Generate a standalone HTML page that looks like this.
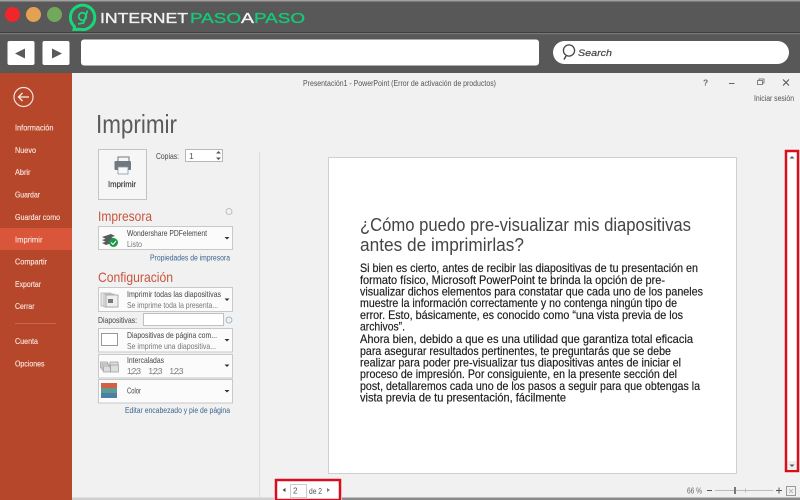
<!DOCTYPE html>
<html lang="es">
<head>
<meta charset="utf-8">
<title>Imprimir</title>
<style>
html,body{margin:0;padding:0;width:800px;height:500px;overflow:hidden;background:#f1f1f1}
svg{display:block}
text{font-family:"Liberation Sans",sans-serif}
</style>
</head>
<body>
<svg width="800" height="500" viewBox="0 0 800 500" xmlns="http://www.w3.org/2000/svg">
<defs><filter id="b" filterUnits="userSpaceOnUse" x="0" y="0" width="800" height="500"><feGaussianBlur stdDeviation="0.3"/></filter></defs>
<g filter="url(#b)">
<rect width="800" height="500" fill="#f1f1f1"/>
<!-- browser chrome -->
<rect width="800" height="73" fill="#585858"/>
<rect y="0" width="800" height="1.500" fill="#a0a0a0"/>
<rect y="32" width="800" height="1" fill="#404040"/>
<rect y="33" width="800" height="1.200" fill="#777"/>
<circle cx="12.500" cy="14.500" r="7.500" fill="#f0252a"/>
<circle cx="33.500" cy="14.500" r="7.500" fill="#e5a153"/>
<circle cx="54.500" cy="14.500" r="7.500" fill="#72a85c"/>
<g fill="none" stroke="#14d878">
<path d="M74 29.500 L74.500 26.500 A12.200 12.200 0 1 1 80 29.300 Z" stroke-width="3"/>
<circle cx="82.500" cy="16.500" r="3.800" stroke-width="1.800"/>
<path d="M87.500 10.500 L83.500 23 L78 24" stroke-width="1.800"/>
</g>
<text x="100" y="23" font-size="15" fill="#f2f2f2" stroke="#f2f2f2" stroke-width=".35" textLength="88" lengthAdjust="spacingAndGlyphs">INTERNET</text>
<text x="190" y="23" font-size="15" fill="#15c878" stroke="#15c878" stroke-width=".35" textLength="51" lengthAdjust="spacingAndGlyphs">PASO</text>
<text x="241" y="23" font-size="15" fill="#f2f2f2" stroke="#f2f2f2" stroke-width=".35" textLength="13" lengthAdjust="spacingAndGlyphs">A</text>
<text x="254" y="23" font-size="15" fill="#15c878" stroke="#15c878" stroke-width=".35" textLength="51" lengthAdjust="spacingAndGlyphs">PASO</text>
<rect x="7.500" y="41" width="27" height="24" rx="2" fill="#fff"/>
<rect x="42.500" y="41" width="27" height="24" rx="2" fill="#fff"/>
<path d="M15 53.500 L25 48.500 V58.500 Z" fill="#5a5a5a"/>
<path d="M62 53.500 L52 48.500 V58.500 Z" fill="#5a5a5a"/>
<rect x="81" y="39.500" width="458" height="26" rx="3" fill="#fff"/>
<rect x="553" y="41" width="236" height="23" rx="11.500" fill="#fff"/>
<circle cx="569" cy="50.500" r="5.600" fill="none" stroke="#444" stroke-width="1.300"/>
<path d="M566 56 L564 59.500" stroke="#444" stroke-width="1.500"/>
<text x="578" y="56" font-size="9.500" font-style="italic" fill="#444" stroke="#444" stroke-width=".2" textLength="34" lengthAdjust="spacingAndGlyphs">Search</text>
<!-- sidebar -->
<rect x="0" y="73" width="72" height="427" fill="#b7472a"/>
<rect x="0" y="228" width="72" height="22" fill="#d9573a"/>
<circle cx="23.500" cy="97" r="9.500" fill="none" stroke="#f4e3dd" stroke-width="1.200"/>
<path d="M29 97 H18.500 M22.500 93 L18.500 97 L22.500 101" fill="none" stroke="#f8eeea" stroke-width="1.300"/>
<g font-size="8.300" fill="#fbe9e3" stroke="#fbe9e3" stroke-width=".12">
<text x="15" y="130.500" textLength="38.500" lengthAdjust="spacingAndGlyphs">Información</text>
<text x="15" y="153" textLength="21" lengthAdjust="spacingAndGlyphs">Nuevo</text>
<text x="15" y="175" textLength="15.500" lengthAdjust="spacingAndGlyphs">Abrir</text>
<text x="15" y="197.500" textLength="25" lengthAdjust="spacingAndGlyphs">Guardar</text>
<text x="15" y="220" textLength="45" lengthAdjust="spacingAndGlyphs">Guardar como</text>
<text x="15" y="242.500" textLength="27.500" lengthAdjust="spacingAndGlyphs">Imprimir</text>
<text x="15" y="264.500" textLength="32" lengthAdjust="spacingAndGlyphs">Compartir</text>
<text x="15" y="287" textLength="26" lengthAdjust="spacingAndGlyphs">Exportar</text>
<text x="15" y="309" textLength="19.500" lengthAdjust="spacingAndGlyphs">Cerrar</text>
<text x="15" y="344" textLength="23" lengthAdjust="spacingAndGlyphs">Cuenta</text>
<text x="15" y="366.500" textLength="29.500" lengthAdjust="spacingAndGlyphs">Opciones</text>
</g>
<rect x="15" y="323" width="41" height="1" fill="#c7684f"/>
<!-- title bar -->
<text x="303" y="86" font-size="8" fill="#555" textLength="193" lengthAdjust="spacingAndGlyphs">Presentación1 - PowerPoint (Error de activación de productos)</text>
<text x="703" y="85.500" font-size="8.500" font-weight="bold" fill="#666">?</text>
<rect x="729" y="83" width="5.500" height="1" fill="#666"/>
<path d="M757.500 80.500 h5 v4 h-5 z M759 80.500 v-1.500 h5 v4 h-1.500" fill="none" stroke="#666" stroke-width=".8"/>
<path d="M783 79.500 L789 85.500 M789 79.500 L783 85.500" stroke="#555" stroke-width="1"/>
<text x="754" y="101" font-size="8" fill="#555" textLength="40" lengthAdjust="spacingAndGlyphs">Iniciar sesión</text>
<!-- print panel -->
<text x="96" y="133" font-size="26" fill="#5a5a5a" textLength="81" lengthAdjust="spacingAndGlyphs">Imprimir</text>
<rect x="98.500" y="149.500" width="48" height="50" fill="#f6f6f6" stroke="#c4c4c4"/>
<g>
<rect x="118" y="157" width="11" height="5" fill="#f6f6f6" stroke="#6f7880"/>
<rect x="114.500" y="161" width="16.500" height="9" rx="1" fill="#6f7880"/>
<rect x="118" y="167" width="10" height="7" fill="#f8f8f8" stroke="#8a98a8" stroke-width=".8"/>
</g>
<text x="108" y="187" font-size="8.300" fill="#333" stroke="#333" stroke-width=".15" textLength="28" lengthAdjust="spacingAndGlyphs">Imprimir</text>
<text x="156" y="159" font-size="8.300" fill="#444" textLength="23" lengthAdjust="spacingAndGlyphs">Copias:</text>
<rect x="185.500" y="149.500" width="37" height="12" fill="#fff" stroke="#b8b8b8"/>
<text x="189" y="159" font-size="8.500" fill="#555">1</text>
<path d="M216 153.500 h5 l-2.500 -2.500 z M216 157.500 h5 l-2.500 2.500 z" fill="#555"/>

<text x="98" y="221" font-size="14" fill="#c8553d" textLength="54" lengthAdjust="spacingAndGlyphs">Impresora</text>
<circle cx="229" cy="211.500" r="3" fill="none" stroke="#aab4c0" stroke-width=".8"/>
<rect x="98.500" y="226.500" width="134" height="23" fill="#fbfbfb" stroke="#c8c8c8"/>
<path d="M102 237 l9 -3 4 2 -9 3z M102 240 l9 -3 4 2 -9 3z M102 243 l9 -3 4 2 -9 3z" fill="#5a5a5a"/>
<circle cx="113.500" cy="242.500" r="4.500" fill="#1a9a4a"/>
<path d="M111 242.500 l2 2 3 -3.500" fill="none" stroke="#fff" stroke-width="1"/>
<text x="127" y="236" font-size="8.200" fill="#444" textLength="80" lengthAdjust="spacingAndGlyphs">Wondershare PDFelement</text>
<text x="127" y="247" font-size="8.200" fill="#777" textLength="15" lengthAdjust="spacingAndGlyphs">Listo</text>
<path d="M224.500 237 h5 l-2.500 2.500 z" fill="#333"/>
<text x="150" y="260.500" font-size="8" fill="#3d6490" textLength="80" lengthAdjust="spacingAndGlyphs">Propiedades de impresora</text>

<text x="98" y="282" font-size="14" fill="#c8553d" textLength="75" lengthAdjust="spacingAndGlyphs">Configuración</text>
<g fill="#fbfbfb" stroke="#c8c8c8">
<rect x="98.500" y="287.500" width="134" height="24"/>
<rect x="98.500" y="328.500" width="134" height="23.500"/>
<rect x="98.500" y="354.500" width="134" height="23.500"/>
<rect x="98.500" y="379.500" width="134" height="23.500"/>
</g>
<rect x="101" y="293" width="10" height="13" fill="#e8e8e8" stroke="#a0a0a0" stroke-width=".6"/>
<rect x="104" y="294" width="10" height="13" fill="#e8e8e8" stroke="#a0a0a0" stroke-width=".6"/>
<rect x="106" y="295" width="12" height="12" fill="#eee" stroke="#909090" stroke-width=".7"/>
<rect x="108" y="299" width="5" height="4" fill="#777"/>
<text x="127" y="297" font-size="8.200" fill="#444" textLength="94" lengthAdjust="spacingAndGlyphs">Imprimir todas las diapositivas</text>
<text x="127" y="308" font-size="8.200" fill="#777" textLength="91" lengthAdjust="spacingAndGlyphs">Se imprime toda la presenta...</text>
<path d="M224.500 298.500 h5 l-2.500 2.500 z" fill="#333"/>
<text x="98" y="323" font-size="8.200" fill="#444" textLength="39" lengthAdjust="spacingAndGlyphs">Diapositivas:</text>
<rect x="143.500" y="313.500" width="80" height="12" fill="#fff" stroke="#c0c0c0"/>
<circle cx="229" cy="320" r="3" fill="none" stroke="#8aa8c8" stroke-width=".8"/>
<rect x="101.500" y="333.500" width="16" height="12" fill="#fff" stroke="#999"/>
<text x="127" y="338" font-size="8.200" fill="#444" textLength="90" lengthAdjust="spacingAndGlyphs">Diapositivas de página com...</text>
<text x="127" y="349" font-size="8.200" fill="#777" textLength="89" lengthAdjust="spacingAndGlyphs">Se imprime una diapositiva...</text>
<path d="M224.500 339 h5 l-2.500 2.500 z" fill="#333"/>
<g fill="#ddd" stroke="#999" stroke-width=".7">
<rect x="100.500" y="362" width="7" height="6"/><rect x="102" y="364" width="7" height="6"/><rect x="103.500" y="366" width="7" height="6"/>
<rect x="110" y="362" width="8" height="6"/><rect x="110.500" y="365" width="8" height="7"/>
</g>
<text x="127" y="363" font-size="8.200" fill="#444" textLength="37" lengthAdjust="spacingAndGlyphs">Intercaladas</text>
<g font-size="8" fill="#777"><text x="127" y="374" textLength="14">1;2;3</text><text x="148.500" y="374" textLength="14">1;2;3</text><text x="169.500" y="374" textLength="14">1;2;3</text></g>
<path d="M224.500 364.500 h5 l-2.500 2.500 z" fill="#333"/>
<rect x="101" y="383" width="16" height="5" fill="#d0604a"/>
<rect x="101" y="388" width="16" height="5" fill="#5f9a8c"/>
<rect x="101" y="393" width="16" height="5" fill="#4a80a8"/>
<text x="127" y="393.500" font-size="8.200" fill="#444" textLength="14" lengthAdjust="spacingAndGlyphs">Color</text>
<path d="M224.500 390 h5 l-2.500 2.500 z" fill="#333"/>
<text x="125" y="413" font-size="8" fill="#3d6490" textLength="105" lengthAdjust="spacingAndGlyphs">Editar encabezado y pie de página</text>

<rect x="259" y="152" width="1" height="345" fill="#dcdcdc"/>
<!-- paper -->
<rect x="328.500" y="157.500" width="408" height="316" fill="#fff" stroke="#cfcfcf"/>
<g fill="#444" font-size="18.500">
<text x="360" y="231" textLength="331" lengthAdjust="spacingAndGlyphs">¿Cómo puedo pre-visualizar mis diapositivas</text>
<text x="360" y="251" textLength="164" lengthAdjust="spacingAndGlyphs">antes de imprimirlas?</text>
</g>
<g fill="#1e1e1e" stroke="#1e1e1e" stroke-width=".18" font-size="11.800">
<text x="360" y="272" textLength="338" lengthAdjust="spacingAndGlyphs">Si bien es cierto, antes de recibir las diapositivas de tu presentación en</text>
<text x="360" y="284" textLength="305" lengthAdjust="spacingAndGlyphs">formato físico, Microsoft PowerPoint te brinda la opción de pre-</text>
<text x="360" y="295.500" textLength="343" lengthAdjust="spacingAndGlyphs">visualizar dichos elementos para constatar que cada uno de los paneles</text>
<text x="360" y="307" textLength="317" lengthAdjust="spacingAndGlyphs">muestre la información correctamente y no contenga ningún tipo de</text>
<text x="360" y="319" textLength="323" lengthAdjust="spacingAndGlyphs">error. Esto, básicamente, es conocido como “una vista previa de los</text>
<text x="360" y="330.500" textLength="45" lengthAdjust="spacingAndGlyphs">archivos”.</text>
<text x="360" y="343" textLength="333" lengthAdjust="spacingAndGlyphs">Ahora bien, debido a que es una utilidad que garantiza total eficacia</text>
<text x="360" y="355" textLength="311" lengthAdjust="spacingAndGlyphs">para asegurar resultados pertinentes, te preguntarás que se debe</text>
<text x="360" y="366.500" textLength="321" lengthAdjust="spacingAndGlyphs">realizar para poder pre-visualizar tus diapositivas antes de iniciar el</text>
<text x="360" y="378" textLength="317" lengthAdjust="spacingAndGlyphs">proceso de impresión. Por consiguiente, en la presente sección del</text>
<text x="360" y="390" textLength="340" lengthAdjust="spacingAndGlyphs">post, detallaremos cada uno de los pasos a seguir para que obtengas la</text>
<text x="360" y="401.500" textLength="206" lengthAdjust="spacingAndGlyphs">vista previa de tu presentación, fácilmente</text>
</g>
<!-- scrollbar highlight -->
<rect x="786" y="151" width="12" height="320" fill="#fff" stroke="#d9101f" stroke-width="2.500"/>
<path d="M789.500 158.500 h5 l-2.500 -2.500 z" fill="#555"/>
<rect x="787.500" y="461" width="9" height="9" fill="#eee"/>
<path d="M789.500 464.500 h5 l-2.500 2.500 z" fill="#555"/>
<!-- page nav highlight -->
<rect x="276" y="480" width="64" height="20" fill="#fff" stroke="#d9101f" stroke-width="2.500"/>
<path d="M285.500 488 v4 l-3 -2 z" fill="#444"/>
<rect x="290.500" y="484.500" width="16" height="13" fill="#fff" stroke="#ccc"/>
<text x="293" y="493.500" font-size="8.200" fill="#555">2</text>
<text x="309" y="494" font-size="8.200" fill="#555" textLength="13" lengthAdjust="spacingAndGlyphs">de 2</text>
<path d="M327 488 v4 l3 -2 z" fill="#777"/>
<!-- zoom -->
<text x="687" y="493.500" font-size="8" fill="#666" textLength="15" lengthAdjust="spacingAndGlyphs">66 %</text>
<rect x="707" y="490" width="5" height="1" fill="#555"/>
<rect x="715" y="490" width="58" height="1" fill="#bbb"/>
<rect x="734" y="487" width="2" height="7" fill="#777"/>
<rect x="745" y="488.500" width="1" height="4" fill="#bbb"/>
<path d="M776 490.500 h6 M779 487.500 v6" stroke="#555" stroke-width="1"/>
<rect x="786.500" y="486.500" width="9" height="9" fill="none" stroke="#999"/>
<path d="M789 489 l4 4 M793 489 l-4 4" stroke="#aaa" stroke-width=".8"/>
<!-- bottom edge -->
<rect x="72" y="497.500" width="203" height="2.500" fill="#cfcfcf"/>
<rect x="342" y="497.500" width="458" height="2.500" fill="#8a8a8a"/>
</g>
</svg>
</body>
</html>
